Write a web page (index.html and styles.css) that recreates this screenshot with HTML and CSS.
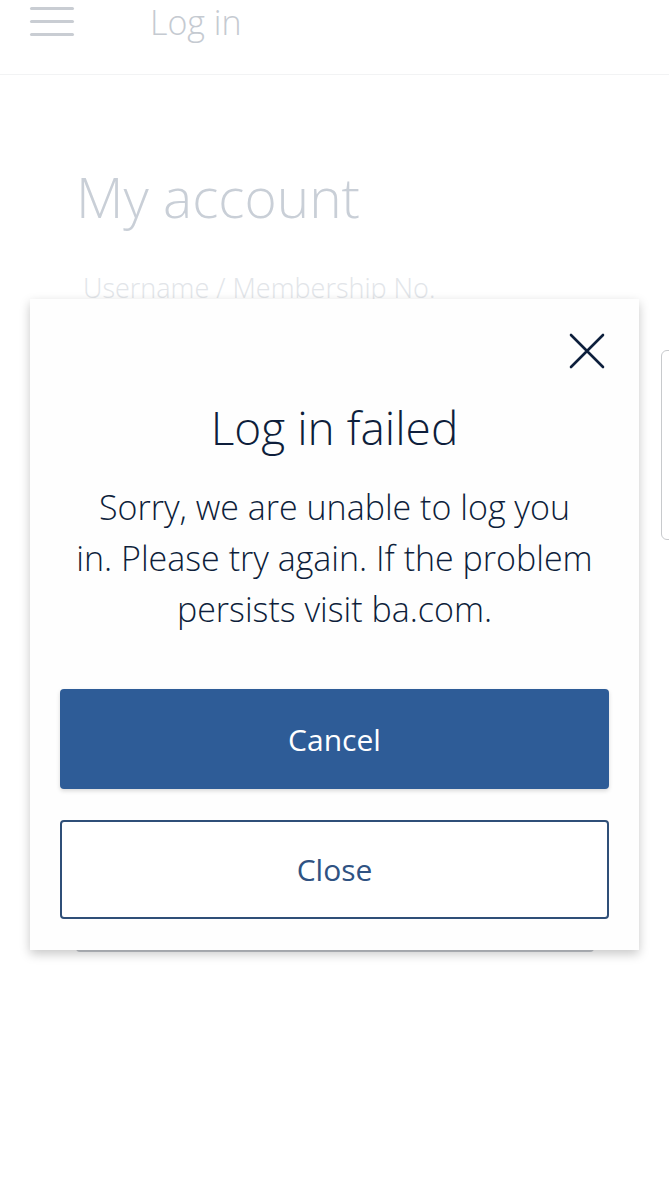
FILE: index.html
```html
<!DOCTYPE html>
<html lang="en">
<head>
  <meta charset="UTF-8">
  <meta name="viewport" content="width=device-width, initial-scale=1.0">
  <title>Log in | My account</title>
  <link rel="stylesheet" href="styles.css">
</head>
<body>
  <header class="topbar">
    <div class="menu-icon">
      <span></span>
      <span></span>
      <span></span>
    </div>
    <div class="topbar-title">Log in</div>
  </header>

  <main class="page">
    <h1 class="page-title">My account</h1>
    <label class="field-label">Username / Membership No.</label>
    <div class="login-card"></div>
  </main>

  <!-- panel peeking in from the right edge -->
  <div class="side-panel"></div>

  <!-- Log in failed dialog -->
  <div class="dialog">
    <div class="dialog-top">
      <button class="dialog-x" type="button" aria-label="Close">
        <svg width="36" height="36" viewBox="0 0 36 36">
          <path d="M2 2 L34 34 M34 2 L2 34" stroke="#0d1f3c" stroke-width="2.6" fill="none" stroke-linecap="round"/>
        </svg>
      </button>
    </div>
    <h2 class="dialog-title">Log in failed</h2>
    <p class="dialog-text">Sorry, we are unable to log you<br>in. Please try again. If the problem persists visit ba.com.</p>
    <div class="dialog-actions">
      <button class="btn btn-primary" type="button">Cancel</button>
      <button class="btn btn-outline" type="button">Close</button>
    </div>
  </div>
</body>
</html>
```

FILE: styles.css
```css
body {
  margin: 0;
  background: #ffffff;
  font-family: 'Open Sans', 'Lato', sans-serif;
  width: 669px;
  height: 1200px;
  overflow: hidden;
}

/* Faded page behind the dialog */
.topbar {
  height: 75px;
  border-bottom: 1px solid #f2f3f4;
  display: flex;
  align-items: flex-start;
  box-sizing: border-box;
}

.menu-icon {
  display: flex;
  flex-direction: column;
  gap: 10px;
  margin: 7px 0 0 30px;
  width: 44px;
}

.menu-icon span {
  display: block;
  height: 3px;
  background-color: #c9cdd3;
  border-radius: 2px;
}

.topbar-title {
  margin-left: 76px;
  font-size: 34px;
  font-weight: 300;
  line-height: 44px;
  color: #c5cad1;
}

.page {
  padding: 84px 0 0 76px;
}

.page-title {
  margin: 0;
  font-size: 55px;
  font-weight: 300;
  line-height: 76px;
  color: #c9cfd7;
}

.field-label {
  display: block;
  margin: 35px 0 0 7px;
  font-size: 27px;
  font-weight: 300;
  line-height: 36px;
  color: #e2e5e9;
}

.login-card {
  width: 518px;
  height: 624px;
  margin-top: 20px;
  border-bottom: 2px solid #c3c7cd;
  border-radius: 0 0 4px 4px;
}

.side-panel {
  position: absolute;
  left: 661px;
  top: 350px;
  width: 40px;
  height: 188px;
  border: 1px solid #c8cacd;
  border-radius: 6px;
}

/* Dialog */
.dialog {
  position: absolute;
  left: 30px;
  top: 299px;
  width: 609px;
  height: 651px;
  box-sizing: border-box;
  padding: 0 30px;
  background-color: #fefefe;
  box-shadow: 0 4px 10px rgba(0, 0, 0, 0.22);
}

.dialog-top {
  display: flex;
  justify-content: flex-end;
  padding-top: 34px;
  margin-right: 4px;
}

.dialog-x {
  border: none;
  background: none;
  padding: 0;
  width: 36px;
  height: 36px;
  cursor: pointer;
}

.dialog-title {
  margin: 26px 0 0;
  text-align: center;
  font-size: 46px;
  font-weight: 300;
  line-height: 64px;
  color: #0e1e3b;
}

.dialog-text {
  margin: 23px -6px 0;
  text-align: center;
  font-size: 34px;
  font-weight: 300;
  line-height: 51px;
  color: #0e1e3b;
}

.dialog-actions {
  display: flex;
  flex-direction: column;
  gap: 31px;
  margin-top: 54px;
}

.btn {
  height: 100px;
  font-family: 'Open Sans', sans-serif;
  font-size: 30px;
  border-radius: 4px;
  cursor: pointer;
}

.btn-primary {
  border: none;
  background-color: #2e5c97;
  color: #ffffff;
  box-shadow: 0 2px 4px rgba(0, 0, 0, 0.15);
}

.btn-outline {
  height: 99px;
  border: 2px solid #2f4f78;
  background-color: #ffffff;
  color: #2f5282;
}
```
